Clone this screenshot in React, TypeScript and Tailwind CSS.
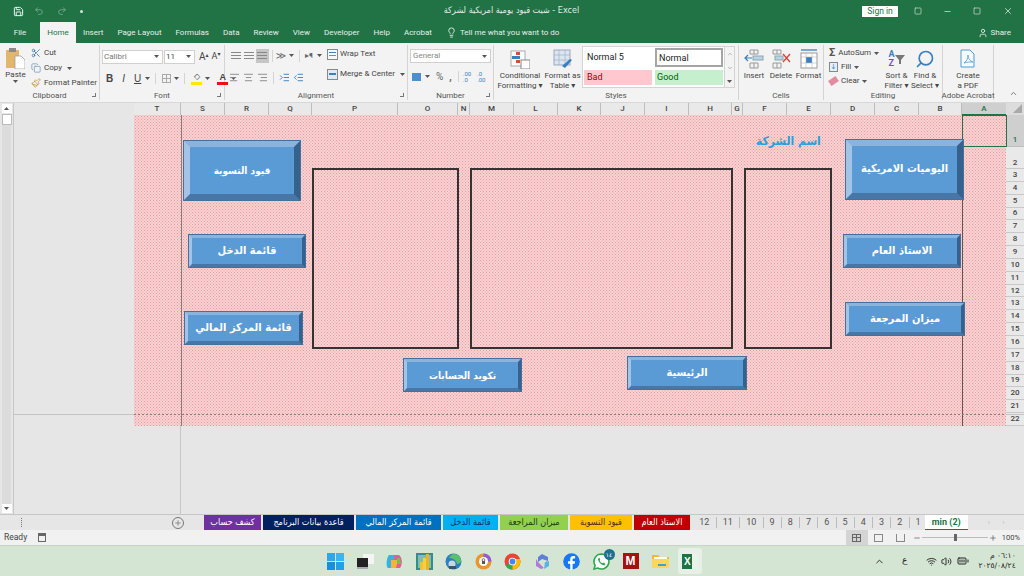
import React from 'react';
import {
  AlignCenter, AlignLeft, AlignRight, BatteryFull, ChevronDown, ChevronUp, Copy, IndentDecrease, IndentIncrease,
  Lightbulb, Minus, Paintbrush, Plus, Redo2, Save, Scissors, Search, Square, Undo2, User, Volume2, Wifi, X,
} from 'lucide-react';

const columns: [string, string][] = [
  ['T', 'w-[47px]'], ['S', 'w-[44px]'], ['R', 'w-[44px]'], ['Q', 'w-[43px]'], ['P', 'w-[86px]'], ['O', 'w-[60px]'],
  ['N', 'w-[12px]'], ['M', 'w-[44px]'], ['L', 'w-[44px]'], ['K', 'w-[43px]'], ['J', 'w-[44px]'], ['I', 'w-[44px]'],
  ['H', 'w-[43px]'], ['G', 'w-[11px]'], ['F', 'w-[44px]'], ['E', 'w-[44px]'], ['D', 'w-[44px]'], ['C', 'w-[44px]'],
  ['B', 'w-[43px]'],
];

const rows = Array.from({ length: 20 }, (_, i) => i + 3);

const colorTabs = [
  { label: 'كشف حساب', cls: 'w-[57px] bg-[#7030a0] text-white' },
  { label: 'قاعدة بيانات البرنامج', cls: 'w-[91px] bg-[#002060] text-white' },
  { label: 'قائمة المركز المالي', cls: 'w-[85px] bg-[#0070c0] text-white' },
  { label: 'قائمة الدخل', cls: 'w-[55px] bg-[#00b0f0] text-[#10305a]' },
  { label: 'ميزان المراجعة', cls: 'w-[68px] bg-[#92d050] text-[#1d3a10]' },
  { label: 'قيود التسوية', cls: 'w-[62px] bg-[#ffc000] text-[#4a3500]' },
  { label: 'الاستاذ العام', cls: 'w-[56px] bg-[#c00000] text-white' },
];

const shapes = [
  { label: 'قيود التسوية', cls: 'left-[49px] top-[25px] w-[118px] h-[61px] border-[7px]', text: 'text-[10px]' },
  { label: 'اليوميات الامريكية', cls: 'left-[711px] top-[24px] w-[119px] h-[61px] border-[7px]', text: 'text-[11px]' },
  { label: 'قائمة الدخل', cls: 'left-[54px] top-[119px] w-[118px] h-[34px] border-[4px]', text: 'text-[11px]' },
  { label: 'الاستاذ العام', cls: 'left-[709px] top-[119px] w-[118px] h-[34px] border-[4px]', text: 'text-[11px]' },
  { label: 'قائمة المركز المالي', cls: 'left-[50px] top-[196px] w-[119px] h-[34px] border-[4px]', text: 'text-[11px]' },
  { label: 'ميزان المرجعة', cls: 'left-[711px] top-[187px] w-[120px] h-[34px] border-[4px]', text: 'text-[11px]' },
  { label: 'تكويد الحسابات', cls: 'left-[269px] top-[243px] w-[119px] h-[34px] border-[4px]', text: 'text-[10px]' },
  { label: 'الرئيسية', cls: 'left-[493px] top-[241px] w-[120px] h-[34px] border-[4px]', text: 'text-[11px]' },
];

const Caret = () => (
  <svg width="5" height="3" viewBox="0 0 5 3" className="shrink-0"><path d="M0 0h5L2.5 3z" fill="#555" /></svg>
);

const Group = ({ label, width, launcher, children }: { label: string; width: string; launcher?: boolean; children: React.ReactNode }) => (
  <div className={`${width} shrink-0 flex flex-col border-r border-[#d4d4d4] my-[2px]`}>
    <div className="h-[48px] flex">{children}</div>
    <div className="h-[9px] flex items-center justify-center relative text-[8px] text-[#555] whitespace-nowrap">
      {label}
      {launcher && <span className="absolute right-[3px] top-[2px] w-[4px] h-[4px] border-r border-b border-[#777]" />}
    </div>
  </div>
);

const BigBtn = ({ width, lines, children }: { width: string; lines: string[]; children: React.ReactNode }) => (
  <div className={`${width} flex flex-col items-center text-[8px] leading-[10px] text-[#444]`}>
    <div className="h-[24px] mt-[2px] flex items-center justify-center">{children}</div>
    {lines.map((l) => <span key={l} className="whitespace-nowrap">{l}</span>)}
  </div>
);

const ColLines = ({ active }: { active?: boolean }) => (
  <span className={`w-[15px] h-[14px] flex flex-col items-center justify-center gap-[2px] ${active ? 'bg-[#c6c6c6]' : ''}`}>
    <span className="w-[10px] h-px bg-[#888]" />
    <span className="w-[10px] h-px bg-[#888]" />
    <span className="w-[10px] h-px bg-[#888]" />
  </span>
);

const Windows = () => (
  <svg width="17" height="17" viewBox="0 0 17 17"><rect width="8" height="8" fill="#2aa9e8" /><rect x="9" width="8" height="8" fill="#39b6f0" /><rect y="9" width="8" height="8" fill="#1690dc" /><rect x="9" y="9" width="8" height="8" fill="#22a0e6" /></svg>
);

const taskIcons: React.ReactNode[] = [
  <Windows key="win" />,
  <svg key="tv" width="17" height="15" viewBox="0 0 17 15"><rect x="6" y="0" width="11" height="10" fill="#f4f4f4" /><rect x="0" y="4" width="11" height="9" fill="#222" /><rect x="0" y="13" width="11" height="2" fill="#aaa" /></svg>,
  <svg key="cop" width="17" height="17" viewBox="0 0 17 17"><path d="M3 2h6l-2 13H2C0 15 0 5 3 2z" fill="#3ab0e8" /><path d="M8 2h5c3 2 4 9 1 13H8z" fill="#e85a9a" /><path d="M5 7h7l-2 8H5z" fill="#f7b23c" /><path d="M11 5h3l1 6h-4z" fill="#6fc05a" /></svg>,
  <svg key="bi" width="17" height="17" viewBox="0 0 17 17"><rect width="17" height="17" fill="#2f8f8a" /><rect x="2" y="2" width="13" height="13" fill="#fff" opacity="0.4" /><rect x="4" y="9" width="3" height="8" fill="#f2c230" /><rect x="7" y="5" width="3" height="12" fill="#f5cf4a" /><rect x="10" y="1" width="3" height="16" fill="#e8b520" /></svg>,
  <svg key="edge" width="17" height="17" viewBox="0 0 17 17"><circle cx="8.5" cy="8.5" r="8" fill="#2c7fc4" /><path d="M9 1c4 0 7 3 7 7 0 2-2 3-4 3-1-4-4-6-8-6 1-2 3-4 5-4z" fill="#5cc06a" /><circle cx="7" cy="11" r="3.5" fill="#c8d8e0" /><rect x="4" y="13" width="7" height="3" fill="#38566e" /></svg>,
  <svg key="vpn" width="17" height="17" viewBox="0 0 17 17"><circle cx="8.5" cy="8.5" r="8" fill="#e8962e" /><path d="M8.5.5a8 8 0 0 1 8 8h-4a4 4 0 0 0-4-4z" fill="#8f5ed6" /><circle cx="8.5" cy="8.5" r="4.5" fill="#fff" /><rect x="7" y="8" width="3" height="3" fill="#555" /><circle cx="8.5" cy="7" r="1.4" fill="none" stroke="#555" strokeWidth="0.8" /></svg>,
  <svg key="chrome" width="17" height="17" viewBox="0 0 17 17"><circle cx="8.5" cy="8.5" r="8" fill="#ea4335" /><path d="M8.5 8.5 1.5 12.5A8 8 0 0 0 8.5 16.5z" fill="#34a853" /><path d="M8.5 8.5 8.5 16.5A8 8 0 0 0 16 6H8.5z" fill="#fbbc04" /><circle cx="8.5" cy="8.5" r="3.8" fill="#fff" /><circle cx="8.5" cy="8.5" r="2.9" fill="#4285f4" /></svg>,
  <svg key="m365" width="17" height="17" viewBox="0 0 17 17"><path d="M8 1l6 3v4l-6-2-4 3V4z" fill="#5f7fd8" /><path d="M4 9l6 6-3 1-5-3V6z" fill="#b07ad8" /><path d="M15 8v5l-5 3 1-7z" fill="#58b4e8" /></svg>,
  <svg key="fb" width="17" height="17" viewBox="0 0 17 17"><circle cx="8.5" cy="8.5" r="8.3" fill="#1877f2" /><path d="M9.6 17v-6.3h2.1l.4-2.5H9.6V6.7c0-.8.3-1.3 1.3-1.3h1.2V3.200c-.5-.1-1.100-.1-1.800-.1-1.900 0-3.100 1.100-3.100 3.200v1.900H5v2.500h2.200V17z" fill="#fff" /></svg>,
  <div key="wa" className="relative w-[17px] h-[17px]">
    <svg width="17" height="17" viewBox="0 0 17 17"><path d="M8.500 1a7.500 7.500 0 0 0-6.400 11.400L1 16l3.700-1A7.500 7.500 0 1 0 8.500 1z" fill="#fff" stroke="#2aa84f" strokeWidth="1.600" /><path d="M5.500 5c1-.8 1.500 1 1.700 1.700.1.600-.7.900-.4 1.400.6 1 1.400 1.700 2.400 2.200.5.200.8-.7 1.400-.5.800.3 2.200.9 1.500 1.900-2.200 2.300-8.700-3.900-6.600-6.700z" fill="#2aa84f" /></svg>
    <span className="absolute -top-[4px] -right-[5px] w-[11px] h-[11px] rounded-full bg-[#1f6f8f] text-white text-[6px] leading-[11px] text-center">١٤</span>
  </div>,
  <span key="m" className="w-[16px] h-[16px] bg-[#a51010] text-white text-[12px] leading-[16px] font-bold text-center font-['Liberation_Sans',sans-serif]">M</span>,
  <svg key="folder" width="17" height="16" viewBox="0 0 17 16"><path d="M0 2h6l2 2h9v11H0z" fill="#f5b82e" /><rect y="6" width="17" height="9" fill="#fbd75b" /><rect x="2" y="4" width="13" height="2" fill="#fff" /><rect x="6" y="11" width="8" height="2" fill="#3ba0dc" /></svg>,
];

export default function App() {
  return (
    <div className="w-[1024px] h-[576px] overflow-hidden flex flex-col bg-[#e6e6e6] font-['Roboto','DejaVu_Sans',sans-serif] text-[#444]">
      {/* title bar */}
      <div className="h-[22px] bg-[#217346] text-white flex items-center shrink-0">
        <Save size={11} className="ml-[13px]" />
        <Undo2 size={10} className="ml-[10px] opacity-40" />
        <Redo2 size={10} className="ml-[13px] opacity-40" />
        <span className="ml-[13px] w-[3px] h-[3px] rounded-full bg-white opacity-80" />
        <div className="flex-1 text-center text-[9px] pl-[78px] text-[#dfeee5] font-['DejaVu_Sans_Condensed','DejaVu_Sans',sans-serif]">شيت قيود يومية امريكية لشركة  -  Excel</div>
        <span className="w-[36px] h-[11px] bg-white text-[#217346] text-[8.5px] leading-[11px] text-center mr-[16px]">Sign in</span>
        <Square size={8} className="mr-[21px] opacity-80" />
        <Minus size={9} className="mr-[21px] opacity-80" />
        <Square size={8} className="mr-[22px] opacity-80" />
        <X size={10} className="mr-[11px] opacity-80" />
      </div>

      {/* menu tabs */}
      <div className="h-[21px] bg-[#217346] text-[#e3efe8] text-[8px] flex items-end shrink-0">
        <span className="h-[21px] w-[40px] leading-[21px] text-center">File</span>
        <span className="h-[21px] w-[36px] leading-[21px] text-center bg-[#f3f3f3] text-[#217346]">Home</span>
        <div className="h-[21px] flex items-center gap-[14px] pl-[7px]">
          <span>Insert</span>
          <span>Page Layout</span>
          <span>Formulas</span>
          <span>Data</span>
          <span>Review</span>
          <span>View</span>
          <span>Developer</span>
          <span>Help</span>
          <span>Acrobat</span>
          <span className="flex items-center gap-[3px]"><Lightbulb size={11} />Tell me what you want to do</span>
        </div>
        <span className="h-[21px] ml-auto mr-[13px] flex items-center gap-[3px]"><User size={10} />Share</span>
      </div>

      {/* ribbon */}
      <div className="h-[60px] bg-[#f3f3f3] border-b border-[#d8d8d8] flex shrink-0 text-[8px]">
        <Group label="Clipboard" width="w-[100px]" launcher>
          <div className="w-[30px] flex flex-col items-center pl-[1px]">
            <svg width="19" height="22" viewBox="0 0 19 22" className="mt-[2px]"><rect x="0" y="3" width="13" height="18" fill="#e3b76b" /><rect x="3" y="1" width="7" height="4" fill="#8a8a8a" /><path d="M9 9h6l4 4v9H9z" fill="#fff" stroke="#999" strokeWidth="0.7" /></svg>
            <span className="leading-[10px] mt-[1px]">Paste</span>
            <Caret />
          </div>
          <div className="flex flex-col gap-[3px] pt-[2px] pl-[1px] leading-[12px]">
            <span className="flex items-center gap-[3px]"><Scissors size={10} className="text-[#3b78b5]" />Cut</span>
            <span className="flex items-center gap-[3px]"><Copy size={10} className="text-[#7f9fbf]" />Copy <span className="ml-[2px]"><Caret /></span></span>
            <span className="flex items-center gap-[3px] whitespace-nowrap"><Paintbrush size={10} className="text-[#c69b47]" />Format Painter</span>
          </div>
        </Group>

        <Group label="Font" width="w-[125px]" launcher>
          <div className="pl-[2px] pt-[4px] flex flex-col gap-[7px]">
            <div className="flex items-center gap-[1px]">
              <span className="w-[61px] h-[14px] bg-white border border-[#d0d0d0] text-[#777] pl-[1px] flex items-center justify-between pr-[3px]">Calibri<Caret /></span>
              <span className="w-[31px] h-[14px] bg-white border border-[#d0d0d0] pl-[1px] flex items-center justify-between pr-[3px]">11<Caret /></span>
              <span className="ml-[3px] text-[10px]">A<sup className="text-[6px]">▴</sup></span>
              <span className="ml-[2px] text-[9px]">A<sup className="text-[6px]">▾</sup></span>
            </div>
            <div className="flex items-center gap-[9px] text-[10px] pl-[4px] font-['Liberation_Sans',sans-serif]">
              <span className="font-bold">B</span>
              <span className="italic">I</span>
              <span className="flex items-center gap-[4px]"><span className="underline">U</span><Caret /></span>
              <span className="w-px h-[11px] bg-[#d4d4d4] -ml-[4px]" />
              <span className="flex items-center gap-[3px] -ml-[3px]"><span className="w-[9px] h-[9px] border border-[#aaa] bg-[linear-gradient(#aaa,#aaa),linear-gradient(#aaa,#aaa)] bg-[length:1px_100%,100%_1px] bg-center bg-no-repeat" /><Caret /></span>
              <span className="w-px h-[11px] bg-[#d4d4d4] -ml-[4px]" />
              <span className="flex items-center gap-[3px] -ml-[3px]"><span className="w-[11px] h-[12px] border-b-[3px] border-[#ffe600] text-[8px] leading-[8px] text-center">◇</span><Caret /></span>
              <span className="flex items-center gap-[3px] -ml-[2px]"><span className="w-[11px] h-[12px] border-b-[3px] border-[#f01010] text-[9px] leading-[9px] text-center font-bold">A</span><Caret /></span>
            </div>
          </div>
        </Group>

        <Group label="Alignment" width="w-[183px]" launcher>
          <div className="w-[97px] shrink-0 pl-[4px] pt-[2px] flex flex-col gap-[5px]">
            <div className="flex items-center h-[17px]">
              <ColLines /><ColLines /><ColLines active />
              <span className="w-px h-[12px] bg-[#d4d4d4] mx-[3px]" />
              <span className="text-[10px] text-[#666]">≫</span><span className="ml-[3px]"><Caret /></span>
              <span className="w-px h-[12px] bg-[#d4d4d4] mx-[5px]" />
              <span className="text-[8px] text-[#666]">▸¶</span><span className="ml-[4px]"><Caret /></span>
            </div>
            <div className="flex items-center gap-[3px] h-[17px] text-[#888]">
              <AlignLeft size={11} /><AlignCenter size={11} /><AlignRight size={11} />
              <span className="w-px h-[12px] bg-[#d4d4d4] mx-[2px]" />
              <IndentIncrease size={11} className="text-[#3a7fbf]" /><IndentDecrease size={11} className="text-[#3a7fbf]" />
            </div>
          </div>
          <div className="ml-[5px] pt-[3px] flex flex-col gap-[8px] leading-[12px]">
            <span className="flex items-center gap-[2px] whitespace-nowrap"><span className="w-[11px] h-[11px] border border-[#888] bg-[#f7f7f7] flex flex-col justify-center gap-[2px] px-[1px]"><span className="h-px bg-[#3a7fbf]" /><span className="h-px bg-[#888]" /></span>Wrap Text</span>
            <span className="flex items-center gap-[2px] whitespace-nowrap"><span className="w-[11px] h-[11px] border border-[#888] bg-[#dfeaf5] flex items-center px-[1px]"><span className="h-[2px] w-full bg-[#3a7fbf]" /></span>Merge &amp; Center <span className="ml-[3px]"><Caret /></span></span>
          </div>
        </Group>

        <Group label="Number" width="w-[86px]" launcher>
          <div className="pl-[2px] pt-[4px] flex flex-col gap-[6px]">
            <span className="w-[81px] h-[14px] bg-white border border-[#d0d0d0] text-[#888] pl-[2px] flex items-center justify-between pr-[3px]">General<Caret /></span>
            <div className="flex items-center gap-[4px] pl-[2px] text-[10px]">
              <span className="w-[9px] h-[8px] bg-[#4f8fcf]" /><Caret />
              <span className="ml-[2px] text-[#666]">%</span>
              <span className="ml-[2px] font-bold text-[#666]">,</span>
              <span className="w-px h-[11px] bg-[#d4d4d4] ml-[2px]" />
              <span className="text-[6px] leading-[6px] text-[#3a7fbf]">.00<br />.0</span>
              <span className="ml-[2px] text-[6px] leading-[6px] text-[#3a7fbf]">.0<br />.00</span>
            </div>
          </div>
        </Group>

        <Group label="Styles" width="w-[245px]">
          <div className="w-[3px]" />
          <BigBtn width="w-[46px]" lines={['Conditional', 'Formatting ▾']}>
            <svg width="20" height="19" viewBox="0 0 20 19"><rect x="1" y="1" width="14" height="15" fill="#fff" stroke="#aaa" /><rect x="6" y="2" width="4" height="3" fill="#d84a3a" /><rect x="2" y="6" width="8" height="3" fill="#3a7fbf" /><rect x="6" y="10" width="4" height="3" fill="#d84a3a" /><rect x="11" y="10" width="9" height="9" fill="#fff" stroke="#888" /></svg>
          </BigBtn>
          <BigBtn width="w-[39px]" lines={['Format as', 'Table ▾']}>
            <svg width="20" height="20" viewBox="0 0 20 20"><rect x="1" y="1" width="16" height="15" fill="#dbe6f3" stroke="#9aa9ba" /><path d="M1 6h16M1 11h16M6 1v15M12 1v15" stroke="#9aa9ba" strokeWidth="0.6" /><path d="M9 17l8-7 2 1-7 8z" fill="#3a7fbf" /></svg>
          </BigBtn>
          <div className="mt-[1px] w-[143px] h-[42px] bg-white border border-[#d4d4d4] grid grid-cols-2 gap-x-[3px] gap-y-[2px] p-[1px] text-[9px]">
            <span className="h-[19px] pl-[3px] leading-[19px] text-[#222]">Normal 5</span>
            <span className="h-[19px] pl-[2px] leading-[16px] border-2 border-[#a5a5a5] text-[#222]">Normal</span>
            <span className="h-[15px] pl-[3px] leading-[15px] bg-[#ffc7ce] text-[#9c0006]">Bad</span>
            <span className="h-[15px] pl-[2px] leading-[15px] bg-[#c6efce] text-[#006100]">Good</span>
          </div>
          <div className="w-[10px] mt-[1px] h-[42px] border border-l-0 border-[#d4d4d4] flex flex-col items-center justify-around text-[#777]">
            <ChevronUp size={6} />
            <ChevronDown size={6} />
            <Caret />
          </div>
        </Group>

        <Group label="Cells" width="w-[85px]">
          <div className="w-[2px]" />
          <BigBtn width="w-[26px]" lines={['Insert']}>
            <svg width="20" height="20" viewBox="0 0 20 20"><path d="M6 1h8v4H6zM6 14h8v5H6zM10 1v4M10 14v5" fill="none" stroke="#999" /><rect x="9" y="7" width="10" height="4" fill="#bcd2ea" stroke="#8aa" /><path d="M8 9H1m3-3L1 9l3 3" fill="none" stroke="#3a7fbf" strokeWidth="1.2" /></svg>
          </BigBtn>
          <BigBtn width="w-[28px]" lines={['Delete']}>
            <svg width="20" height="20" viewBox="0 0 20 20"><path d="M2 1h8v4H2zM2 14h8v5H2zM6 1v4M6 14v5" fill="none" stroke="#999" /><rect x="4" y="7" width="8" height="4" fill="#bcd2ea" stroke="#8aa" /><path d="M12 5l7 8m0-8l-7 8" stroke="#e04030" strokeWidth="1.300" /></svg>
          </BigBtn>
          <BigBtn width="w-[27px]" lines={['Format']}>
            <svg width="20" height="20" viewBox="0 0 20 20"><rect x="2" y="4" width="16" height="15" fill="#fff" stroke="#999" /><rect x="7" y="8" width="6" height="6" fill="#3a7fbf" /><path d="M2 1h16" stroke="#3a7fbf" strokeWidth="1.300" /><path d="M7 4v15M13 4v15M2 8h16M2 14h16" stroke="#bbb" strokeWidth="0.6" /></svg>
          </BigBtn>
        </Group>

        <Group label="Editing" width="w-[119px]">
          <div className="pl-[5px] pt-[2px] flex flex-col gap-[2px] w-[58px] leading-[12px]">
            <span className="flex items-center gap-[3px] whitespace-nowrap"><span className="text-[11px] font-bold text-[#555] leading-[12px]">Σ</span>AutoSum<Caret /></span>
            <span className="flex items-center gap-[3px]"><span className="w-[9px] h-[10px] border border-[#888] bg-[#e3eef8] text-[7px] leading-[8px] text-[#3a7fbf] text-center">↓</span>Fill<Caret /></span>
            <span className="flex items-center gap-[3px]"><span className="w-[9px] h-[6px] bg-[#e28aa0] rotate-[-35deg]" />Clear<Caret /></span>
          </div>
          <BigBtn width="w-[29px]" lines={['Sort &', 'Filter ▾']}>
            <span className="flex items-center">
              <span className="flex flex-col text-[9px] leading-[9px] font-bold"><span className="text-[#3a7fbf]">A</span><span className="text-[#7b4fb0]">Z</span></span>
              <svg width="10" height="10" viewBox="0 0 10 10"><path d="M0 1h10L6 6v4H4V6z" fill="#777" /></svg>
            </span>
          </BigBtn>
          <BigBtn width="w-[28px]" lines={['Find &', 'Select ▾']}>
            <Search size={20} className="text-[#3a7fbf] -scale-x-100" />
          </BigBtn>
        </Group>

        <Group label="Adobe Acrobat" width="w-[51px]">
          <BigBtn width="w-[50px]" lines={['Create', 'a PDF']}>
            <svg width="18" height="20" viewBox="0 0 18 20"><path d="M2 1h9l4 4v13H2z" fill="#f6fbff" stroke="#4a9ad8" /><path d="M5 14c3-2 4-5 4-8 0 4 2 6 5 7-3 0-6 0-9 1z" fill="none" stroke="#4a9ad8" strokeWidth="0.8" /></svg>
          </BigBtn>
        </Group>
        <div className="flex-1 flex items-end justify-end pb-[4px] pr-[6px]"><ChevronUp size={9} className="text-[#555]" /></div>
      </div>

      {/* sheet */}
      <div className="flex-1 flex min-h-0">
        <div className="w-[14px] shrink-0 bg-[#e6e6e6] flex flex-col items-center py-[1px] border-r border-[#c6c6c6]">
          <span className="w-[10px] h-[9px] bg-white flex items-center justify-center"><svg width="5" height="3" viewBox="0 0 5 3"><path d="M0 3h5L2.500 0z" fill="#555" /></svg></span>
          <span className="w-[10px] h-[11px] mt-[1px] bg-white border border-[#bbb]" />
          <span className="flex-1 w-[9px] bg-[#dcdcdc]" />
          <span className="w-[10px] h-[9px] bg-white flex items-center justify-center"><Caret /></span>
        </div>
        <div className="flex-1 flex flex-col relative min-w-0">
          <div className="h-[12px] flex shrink-0 text-[8px] leading-[12px] font-medium text-[#444] text-center">
            <div className="w-[120px] bg-[#e6e6e6]" />
            {columns.map(([name, w]) => (
              <span key={name} className={`${w} bg-[#e9e9e9] border-r border-[#bdbdbd]`}>{name}</span>
            ))}
            <span className="w-[44px] bg-[#cfcfcf] text-[#217346] border-b border-[#217346]">A</span>
            <span className="flex-1 bg-[#dcdcdc] flex items-end justify-end p-[2px]"><svg width="9" height="9" viewBox="0 0 9 9"><path d="M9 0v9H0z" fill="#a9a9a9" /></svg></span>
          </div>
          <span className="absolute left-0 right-0 top-[311px] h-px bg-[#c4c4c4]" />
          <div className="flex h-[311px] shrink-0">
            <div className="w-[120px] bg-[#e6e6e6]" />
            <div className="w-[872px] relative bg-[#f9d3d3] bg-[radial-gradient(#e99a9a_0.75px,transparent_0.9px),radial-gradient(#e99a9a_0.75px,transparent_0.9px)] bg-[length:3px_3px] bg-[position:0_0,1.5px_1.5px]">
              <span className="absolute left-[47px] top-0 bottom-0 w-px bg-[#8d7a7a]" />
              <span className="absolute left-[828px] top-0 bottom-0 w-px bg-[#5f5656]" />
              <span className="absolute left-0 right-0 top-[299px] h-px bg-[repeating-linear-gradient(90deg,#8a7a7a_0,#8a7a7a_2px,transparent_2px,transparent_4px)]" />
              <span className="absolute left-[828px] top-0 w-[45px] h-[32px] border border-[#217346]" />
              <span className="absolute left-[178px] top-[53px] w-[147px] h-[181px] border-2 border-[#333]" />
              <span className="absolute left-[336px] top-[53px] w-[263px] h-[181px] border-2 border-[#333]" />
              <span className="absolute left-[610px] top-[53px] w-[88px] h-[181px] border-2 border-[#333]" />
              <span className="absolute left-[622px] top-[17px] text-[12px] font-bold text-[#27a0dc] font-['DejaVu_Sans_Condensed','DejaVu_Sans',sans-serif] whitespace-nowrap" dir="rtl">اسم الشركة</span>
              {shapes.map((s) => (
                <div key={s.label} className={`absolute ${s.cls} bg-[#5b9bd5] border-t-[#8ab4dc] border-l-[#a3c4e6] border-r-[#36618c] border-b-[#4876a6] outline outline-1 -outline-offset-1 outline-[#41719c] flex items-center justify-center`}>
                  <span className={`${s.text} font-bold text-white whitespace-nowrap font-['DejaVu_Sans_Condensed','DejaVu_Sans',sans-serif]`} dir="rtl">{s.label}</span>
                </div>
              ))}
            </div>
            <div className="flex-1 flex flex-col text-[8px] leading-[10px] text-center text-[#444] font-medium">
              <span className="h-[32px] shrink-0 bg-[#cfcfcf] text-[#217346] flex items-end justify-center pb-[1px] border-b border-[#bdbdbd]">1</span>
              <span className="h-[22px] shrink-0 bg-[#e9e9e9] flex items-end justify-center border-b border-[#c8c8c8]">2</span>
              {rows.map((r) => (
                <span key={r} className="flex-1 min-h-0 bg-[#e9e9e9] flex items-center justify-center border-b border-[#c8c8c8]">{r}</span>
              ))}
            </div>
          </div>
          <div className="flex-1 flex">
            <div className="w-[167px] border-r border-[#c6c6c6]" />
          </div>
        </div>
      </div>

      {/* sheet tabs */}
      <div className="h-[16px] shrink-0 flex items-center bg-[#e6e6e6] border-t border-[#c6c6c6]">
        <span className="ml-[21px] w-[1px] h-[9px] border-l border-dotted border-[#777]" />
        <span className="ml-[150px] w-[12px] h-[12px] rounded-full border border-[#777] flex items-center justify-center"><Plus size={8} className="text-[#666]" /></span>
        <div className="ml-[20px] flex gap-[2px] h-[15px] font-['DejaVu_Sans_Condensed','DejaVu_Sans',sans-serif] text-[9px]">
          {colorTabs.map((t) => (
            <span key={t.label} className={`${t.cls} text-center leading-[14px] whitespace-nowrap overflow-hidden`} dir="rtl">{t.label}</span>
          ))}
        </div>
        <div className="ml-[3px] flex items-center h-[15px] text-[9px] text-[#555]">
          {['12', '11', '10'].map((n) => <span key={n} className="w-[23.5px] text-center border-r border-[#bbb] leading-[11px]">{n}</span>)}
          {['9', '8', '7', '6', '5', '4', '3', '2', '1'].map((n) => <span key={n} className="w-[18.25px] text-center border-r border-[#bbb] leading-[11px]">{n}</span>)}
        </div>
        <span className="w-[43px] h-[16px] bg-white text-[#217346] text-[9px] font-bold text-center leading-[14px] border-b-2 border-[#217346] -ml-[3px]">min (2)</span>
        <span className="ml-[20px] text-[8px] text-[#bbb]">‹</span>
        <span className="ml-[12px] text-[8px] text-[#bbb]">›</span>
      </div>

      {/* status bar */}
      <div className="h-[15px] shrink-0 bg-[#f1f1f1] flex items-center text-[8.5px] text-[#444]">
        <span className="ml-[4px]">Ready</span>
        <span className="ml-[11px] w-[8px] h-[9px] border border-[#666] border-t-[3px]" />
        <span className="ml-auto w-[22px] h-[15px] bg-[#d4d4d4] flex items-center justify-center"><span className="w-[9px] h-[8px] border border-[#666] bg-[linear-gradient(#666,#666),linear-gradient(#666,#666)] bg-[length:1px_100%,100%_1px] bg-center bg-no-repeat" /></span>
        <span className="ml-[6px] w-[9px] h-[8px] border border-[#888]" />
        <span className="ml-[13px] w-[9px] h-[8px] border border-[#888] border-t-0" />
        <Minus size={8} className="ml-[8px] text-[#555]" />
        <span className="ml-[1px] w-[66px] h-px bg-[#bbb] relative"><span className="absolute left-[32px] -top-[3px] w-[3px] h-[7px] bg-[#666]" /></span>
        <Plus size={8} className="ml-[1px] text-[#555]" />
        <span className="ml-[5px] mr-[4px] text-[7.5px]">100%</span>
      </div>

      {/* windows taskbar */}
      <div className="h-[31px] shrink-0 bg-[#d5e5d3] flex items-center border-t border-[#c5d6c4]">
        <div className="ml-[327px] flex items-center gap-[12.5px]">
          {taskIcons.map((ic, i) => <span key={i} className="w-[17px] flex justify-center">{ic}</span>)}
          <span className="w-[24px] h-[26px] -ml-[3px] bg-[#e7efe6] rounded-[3px] flex items-center justify-center">
            <span className="w-[16px] h-[15px] bg-[linear-gradient(90deg,#1f7244_60%,#e9f3ec_60%)] text-white text-[10px] leading-[15px] font-bold pl-[2px] font-['Liberation_Sans',sans-serif]">X</span>
          </span>
        </div>
        <ChevronUp size={11} className="ml-[172px] text-[#222]" />
        <span className="ml-[17px] text-[9px] text-[#222]">ع</span>
        <Wifi size={11} className="ml-[19px] text-[#222]" />
        <Volume2 size={11} className="ml-[4px] text-[#222]" />
        <BatteryFull size={12} className="ml-[5px] text-[#222]" />
        <div className="ml-[9px] text-[7.5px] leading-[10px] text-right text-[#222] font-['DejaVu_Sans',sans-serif]">
          <div dir="rtl">٠٦:١٠ م</div>
          <div>٢٠٢٥/٠٨/٢٤</div>
        </div>
      </div>
    </div>
  );
}
